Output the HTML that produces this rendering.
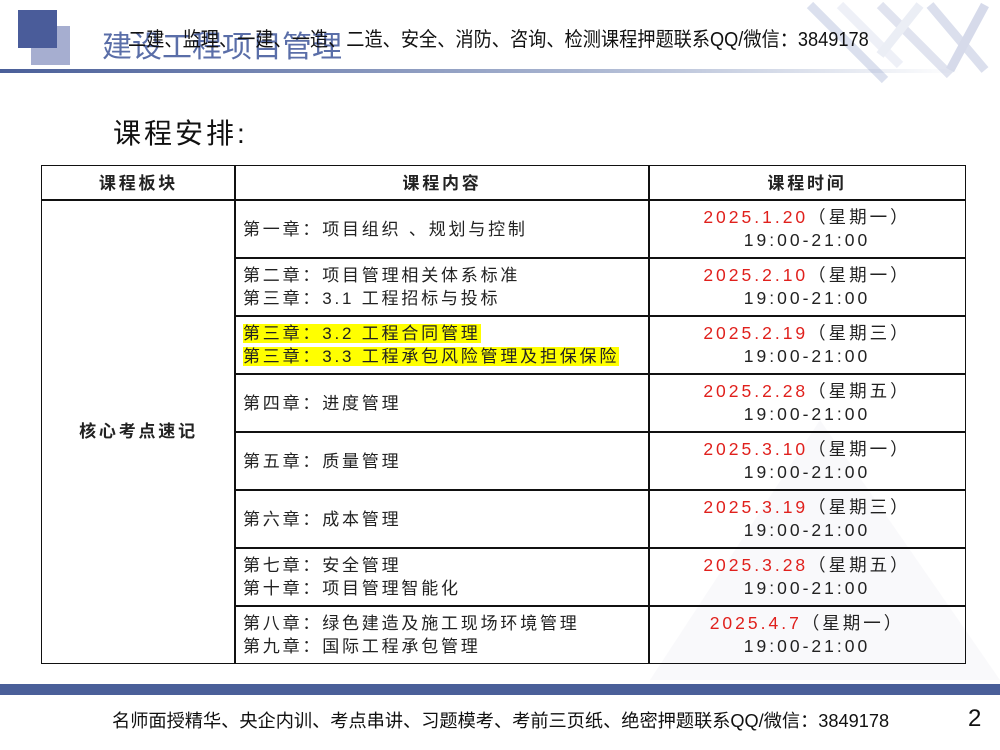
<!DOCTYPE html>
<html><head><meta charset="utf-8"><style>
*{margin:0;padding:0;box-sizing:border-box}
body{width:1000px;height:750px;background:#fff;position:relative;overflow:hidden;font-family:"Liberation Sans","Noto Sans CJK SC",sans-serif}
.a{position:absolute}
.cell{position:absolute;border:1.5px solid #111;display:flex;flex-direction:column;justify-content:center;font-size:17px;letter-spacing:2.8px;color:#222;line-height:23px;white-space:nowrap}
.c{align-items:center;text-align:center}
.t{letter-spacing:3px;font-size:17.5px}
.r{color:#e0201c}
.hl{background:#ffff00}
</style></head><body>
<svg class="a" style="left:0;top:0" width="1000" height="750">
<defs><linearGradient id="g" x1="0" x2="1"><stop offset="0" stop-color="#4a5f99"/><stop offset="0.6" stop-color="#a8b4d0"/><stop offset="1" stop-color="#fff"/></linearGradient></defs>
<rect x="31" y="26" width="39" height="39" fill="#a6aed0"/>
<rect x="18" y="10" width="39" height="38" fill="#4a5c9a"/>
<rect x="0" y="69" width="960" height="4" fill="url(#g)"/>
<g opacity="0.3" stroke-width="9" fill="none">
<path d="M810 5 L885 80" stroke="#8a9ac8"/><path d="M840 5 L900 65" stroke="#c8d0e8"/>
<path d="M880 5 L950 75" stroke="#9aa6cc"/><path d="M930 5 L985 70" stroke="#8a96c4"/>
<path d="M985 5 L950 70" stroke="#7a88bc"/><path d="M920 5 L880 55" stroke="#c0c8e0"/>
</g>
<g opacity="0.035" fill="#4a5c9a"><polygon points="650,680 820,420 1000,680"/></g>
<rect x="0" y="684" width="1000" height="11" fill="#4a5f99"/>
</svg>
<div class="a" style="left:102px;top:22px;font-size:30px;color:#5a6ea8">建设工程项目管理</div>
<div class="a" style="left:128px;top:24px;font-size:18.2px;color:#111;white-space:nowrap;transform:scaleY(1.1);transform-origin:left top">二建、监理、一建、一造、二造、安全、消防、咨询、检测课程押题联系QQ/微信：3849178</div>
<div class="a" style="left:113px;top:112px;font-size:28px;color:#111;letter-spacing:3px">课程安排:</div>

<div class="cell c" style="left:41px;top:165px;width:195px;height:36px;font-weight:bold">课程板块</div>
<div class="cell c" style="left:234px;top:165px;width:416px;height:36px;font-weight:bold">课程内容</div>
<div class="cell c" style="left:648px;top:165px;width:318px;height:36px;font-weight:bold">课程时间</div>
<div class="cell c" style="left:41px;top:199px;width:195px;height:465px;font-weight:bold">核心考点速记</div>

<div class="cell" style="left:234px;top:199px;width:416px;height:60px;padding-left:8px">第一章：项目组织 、规划与控制</div>
<div class="cell" style="left:234px;top:257px;width:416px;height:60px;padding-left:8px"><div>第二章：项目管理相关体系标准</div><div>第三章：3.1 工程招标与投标</div></div>
<div class="cell" style="left:234px;top:315px;width:416px;height:60px;padding-left:8px"><div><span class="hl">第三章：3.2 工程合同管理</span></div><div><span class="hl">第三章：3.3 工程承包风险管理及担保保险</span></div></div>
<div class="cell" style="left:234px;top:373px;width:416px;height:60px;padding-left:8px">第四章：进度管理</div>
<div class="cell" style="left:234px;top:431px;width:416px;height:60px;padding-left:8px">第五章：质量管理</div>
<div class="cell" style="left:234px;top:489px;width:416px;height:60px;padding-left:8px">第六章：成本管理</div>
<div class="cell" style="left:234px;top:547px;width:416px;height:60px;padding-left:8px"><div>第七章：安全管理</div><div>第十章：项目管理智能化</div></div>
<div class="cell" style="left:234px;top:605px;width:416px;height:59px;padding-left:8px"><div>第八章：绿色建造及施工现场环境管理</div><div>第九章：国际工程承包管理</div></div>

<div class="cell c t" style="left:648px;top:199px;width:318px;height:60px"><div><span class="r">2025.1.20</span>（星期一）</div><div>19:00-21:00</div></div>
<div class="cell c t" style="left:648px;top:257px;width:318px;height:60px"><div><span class="r">2025.2.10</span>（星期一）</div><div>19:00-21:00</div></div>
<div class="cell c t" style="left:648px;top:315px;width:318px;height:60px"><div><span class="r">2025.2.19</span>（星期三）</div><div>19:00-21:00</div></div>
<div class="cell c t" style="left:648px;top:373px;width:318px;height:60px"><div><span class="r">2025.2.28</span>（星期五）</div><div>19:00-21:00</div></div>
<div class="cell c t" style="left:648px;top:431px;width:318px;height:60px"><div><span class="r">2025.3.10</span>（星期一）</div><div>19:00-21:00</div></div>
<div class="cell c t" style="left:648px;top:489px;width:318px;height:60px"><div><span class="r">2025.3.19</span>（星期三）</div><div>19:00-21:00</div></div>
<div class="cell c t" style="left:648px;top:547px;width:318px;height:60px"><div><span class="r">2025.3.28</span>（星期五）</div><div>19:00-21:00</div></div>
<div class="cell c t" style="left:648px;top:605px;width:318px;height:59px"><div><span class="r">2025.4.7</span>（星期一）</div><div>19:00-21:00</div></div>

<div class="a" style="left:112px;top:707px;font-size:18.2px;color:#111;white-space:nowrap">名师面授精华、央企内训、考点串讲、习题模考、考前三页纸、绝密押题联系QQ/微信：3849178</div>
<div class="a" style="left:968px;top:705px;font-size:24px;color:#111">2</div>
</body></html>
